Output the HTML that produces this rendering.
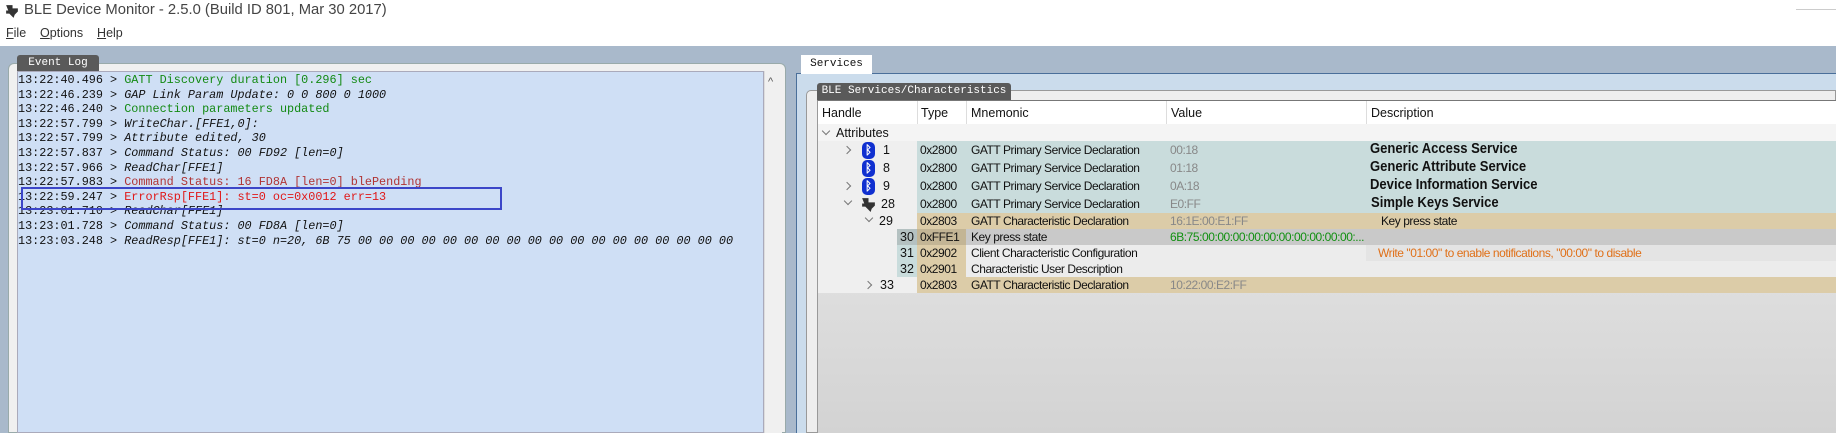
<!DOCTYPE html>
<html><head><meta charset="utf-8"><style>
*{margin:0;padding:0;box-sizing:border-box}
body{width:1836px;height:433px;overflow:hidden;background:#fff;position:relative;font-family:"Liberation Sans",sans-serif}
.a{position:absolute;white-space:nowrap}
.log{font-family:"Liberation Mono",monospace;font-size:11.8px;color:#111;left:18px;line-height:14px}
.g{color:#138a13}.i{font-style:italic}.r{color:#e01818}.br{color:#b03434}
.t{font-size:12px;color:#111;line-height:16px;letter-spacing:-0.45px}
.h{font-size:12.5px;color:#111;line-height:16px}
.row{position:absolute;left:917px;right:0}
.bt{position:absolute;width:13px;height:17px;background:#1030d0;border-radius:5px;color:#fff;font-size:12px;text-align:center;line-height:17px;font-weight:bold}
.chev{position:absolute;width:6px;height:6px;border-right:1.5px solid #777;border-bottom:1.5px solid #777}
.desc{font-size:14.5px;font-weight:bold;color:#111;transform:scaleX(0.9);transform-origin:left}
</style></head><body>
<svg class="a" style="left:4px;top:3px" width="16" height="16" viewBox="0 0 15 15"><path d="M2 2h6v3h5v3l-3 3-1 3-2-2-2-2H2V7h2z" fill="#333"/></svg>
<div class="a" style="left:24px;top:2px;font-size:14.8px;color:#444">BLE Device Monitor - 2.5.0 (Build ID 801, Mar 30 2017)</div>
<div class="a" style="left:6px;top:26px;font-size:12.5px;color:#333"><u>F</u>ile &nbsp;&nbsp; <u>O</u>ptions &nbsp;&nbsp; <u>H</u>elp</div>
<div class="a" style="left:1796px;top:9px;width:40px;height:1px;background:#ccc"></div>
<div class="a" style="left:0;top:46px;width:1836px;height:387px;background:#a9b9cb"></div>
<div class="a" style="left:8px;top:63px;width:778px;height:370px;background:#f0f0f0;border:1px solid #9aa;border-radius:6px 6px 0 0"></div>
<div class="a" style="left:17px;top:55px;width:82px;height:16px;background:#5a5a5a;border-radius:3px 3px 0 0;color:#fff;font-family:'Liberation Mono',monospace;font-size:11px;line-height:16px;text-align:center">Event Log</div>
<div class="a" style="left:17px;top:71px;width:747px;height:362px;background:#cfdff5;border:1px solid #aab"></div>
<div class="a" style="left:764px;top:71px;width:18px;height:362px;background:#f0f0f0;border-left:1px solid #ddd"></div>
<div class="a" style="left:768px;top:76px;font-size:11px;color:#555">^</div>
<div class="a log" style="top:73px">13:22:40.496 &gt; <span class="g">GATT Discovery duration [0.296] sec</span></div>
<div class="a log" style="top:87.6px">13:22:46.239 &gt; <span class="i">GAP Link Param Update: 0 0 800 0 1000</span></div>
<div class="a log" style="top:102.2px">13:22:46.240 &gt; <span class="g">Connection parameters updated</span></div>
<div class="a log" style="top:116.8px">13:22:57.799 &gt; <span class="i">WriteChar.[FFE1,0]:</span></div>
<div class="a log" style="top:131.4px">13:22:57.799 &gt; <span class="i">Attribute edited, 30</span></div>
<div class="a log" style="top:146px">13:22:57.837 &gt; <span class="i">Command Status: 00 FD92 [len=0]</span></div>
<div class="a log" style="top:160.6px">13:22:57.966 &gt; <span class="i">ReadChar[FFE1]</span></div>
<div class="a log" style="top:175.2px">13:22:57.983 &gt; <span class="br">Command Status: 16 FD8A [len=0] blePending</span></div>
<div class="a log" style="top:189.8px">13:22:59.247 &gt; <span class="r">ErrorRsp[FFE1]: st=0 oc=0x0012 err=13</span></div>
<div class="a log" style="top:204.4px">13:23:01.710 &gt; <span class="i">ReadChar[FFE1]</span></div>
<div class="a log" style="top:219px">13:23:01.728 &gt; <span class="i">Command Status: 00 FD8A [len=0]</span></div>
<div class="a log" style="top:233.6px">13:23:03.248 &gt; <span class="i">ReadResp[FFE1]: st=0 n=20, 6B 75 00 00 00 00 00 00 00 00 00 00 00 00 00 00 00 00 00 00</span></div>
<div class="a" style="left:21px;top:187px;width:481px;height:23px;border:2px solid #3c46c8"></div>
<div class="a" style="left:796px;top:73px;width:1040px;height:360px;background:#cbdcec;border-top:1px solid #4a6f9a;border-left:1px solid #4a6f9a"></div>
<div class="a" style="left:801px;top:55px;width:71px;height:19px;background:#fff;font-family:'Liberation Mono',monospace;font-size:11px;line-height:19px;text-align:center;color:#111">Services</div>
<div class="a" style="left:806px;top:90px;width:1030px;height:343px;background:#eee;border:1px solid #999;border-radius:5px 0 0 0"></div>
<div class="a" style="left:817px;top:83px;width:194px;height:17px;background:#5a5a5a;border-radius:3px 3px 0 0;color:#fff;font-family:'Liberation Mono',monospace;font-size:11px;line-height:17px;text-align:center">BLE Services/Characteristics</div>
<div class="a" style="left:817px;top:100px;width:1019px;height:333px;background:linear-gradient(#ececec,#d3d3d3);border-top:1px solid #777;border-left:1px solid #999"></div>
<div class="a" style="left:818px;top:101px;width:1018px;height:23px;background:#fff"></div>
<div class="a" style="left:917px;top:101px;width:1px;height:23px;background:#ddd"></div>
<div class="a" style="left:966px;top:101px;width:1px;height:23px;background:#ddd"></div>
<div class="a" style="left:1166px;top:101px;width:1px;height:23px;background:#ddd"></div>
<div class="a" style="left:1366px;top:101px;width:1px;height:23px;background:#ddd"></div>
<div class="a h" style="left:822px;top:105px">Handle</div>
<div class="a h" style="left:921px;top:105px">Type</div>
<div class="a h" style="left:971px;top:105px">Mnemonic</div>
<div class="a h" style="left:1171px;top:105px">Value</div>
<div class="a h" style="left:1371px;top:105px">Description</div>
<div class="a" style="left:818px;top:124px;width:1018px;height:17px;background:#f4f4f4"></div>
<div class="chev" style="left:823px;top:128px;transform:rotate(45deg)"></div>
<div class="a h" style="left:836px;top:125px">Attributes</div>
<div class="a" style="left:818px;top:141px;width:99px;height:152px;background:#efefef"></div>
<div class="row" style="top:141px;height:72px;background:#c9dcdc"></div>
<div class="row" style="top:213px;height:16px;background:#dccca8"></div>
<div class="row" style="top:229px;height:16px;background:#c9c9c9"></div>
<div class="row" style="top:245px;height:32px;background:#ececec"></div>
<div class="row" style="top:277px;height:16px;background:#dccca8"></div>
<div class="a" style="left:897px;top:229px;width:20px;height:16px;background:#b4c1c1"></div>
<div class="a" style="left:917px;top:229px;width:49px;height:16px;background:#c3b595"></div>
<div class="a" style="left:897px;top:245px;width:20px;height:32px;background:#c9dcdc"></div>
<div class="a" style="left:917px;top:245px;width:49px;height:32px;background:#dccca8"></div>
<div class="a" style="left:1366px;top:245px;width:470px;height:16px;background:#e4e4e4"></div>
<div class="chev" style="left:844px;top:147px;transform:rotate(-45deg)"></div>
<div class="chev" style="left:844px;top:183px;transform:rotate(-45deg)"></div>
<div class="chev" style="left:845px;top:198px;transform:rotate(45deg)"></div>
<div class="chev" style="left:866px;top:215px;transform:rotate(45deg)"></div>
<div class="chev" style="left:865px;top:282px;transform:rotate(-45deg)"></div>
<div class="bt" style="left:862px;top:142px">ᛒ</div>
<div class="bt" style="left:862px;top:160px">ᛒ</div>
<div class="bt" style="left:862px;top:178px">ᛒ</div>
<svg class="a" style="left:860px;top:196px" width="17" height="17" viewBox="0 0 16 16"><path d="M2 2h6v4h6v3l-3 3-1 3-3-3-2-2H2V7h2z" fill="#333"/></svg>
<div class="a h" style="left:883px;top:142px">1</div>
<div class="a h" style="left:883px;top:160px">8</div>
<div class="a h" style="left:883px;top:178px">9</div>
<div class="a h" style="left:881px;top:196px">28</div>
<div class="a h" style="left:879px;top:213px">29</div>
<div class="a h" style="left:900px;top:229px">30</div>
<div class="a h" style="left:900px;top:245px">31</div>
<div class="a h" style="left:900px;top:261px">32</div>
<div class="a h" style="left:880px;top:277px">33</div>
<div class="a t" style="left:920px;top:142px">0x2800</div><div class="a t" style="left:971px;top:142px">GATT Primary Service Declaration</div><div class="a t" style="left:1170px;top:142px;color:#888">00:18</div>
<div class="a t" style="left:920px;top:160px">0x2800</div><div class="a t" style="left:971px;top:160px">GATT Primary Service Declaration</div><div class="a t" style="left:1170px;top:160px;color:#888">01:18</div>
<div class="a t" style="left:920px;top:178px">0x2800</div><div class="a t" style="left:971px;top:178px">GATT Primary Service Declaration</div><div class="a t" style="left:1170px;top:178px;color:#888">0A:18</div>
<div class="a t" style="left:920px;top:196px">0x2800</div><div class="a t" style="left:971px;top:196px">GATT Primary Service Declaration</div><div class="a t" style="left:1170px;top:196px;color:#888">E0:FF</div>
<div class="a t" style="left:920px;top:213px">0x2803</div><div class="a t" style="left:971px;top:213px">GATT Characteristic Declaration</div><div class="a t" style="left:1170px;top:213px;color:#888">16:1E:00:E1:FF</div>
<div class="a t" style="left:920px;top:229px">0xFFE1</div><div class="a t" style="left:971px;top:229px">Key press state</div><div class="a t" style="left:1170px;top:229px;color:#129012">6B:75:00:00:00:00:00:00:00:00:00:00:...</div>
<div class="a t" style="left:920px;top:245px">0x2902</div><div class="a t" style="left:971px;top:245px">Client Characteristic Configuration</div>
<div class="a t" style="left:920px;top:261px">0x2901</div><div class="a t" style="left:971px;top:261px">Characteristic User Description</div>
<div class="a t" style="left:920px;top:277px">0x2803</div><div class="a t" style="left:971px;top:277px">GATT Characteristic Declaration</div><div class="a t" style="left:1170px;top:277px;color:#888">10:22:00:E2:FF</div>
<div class="a desc" style="left:1370px;top:141px">Generic Access Service</div>
<div class="a desc" style="left:1370px;top:159px">Generic Attribute Service</div>
<div class="a desc" style="left:1370px;top:177px">Device Information Service</div>
<div class="a desc" style="left:1371px;top:195px">Simple Keys Service</div>
<div class="a t" style="left:1381px;top:213px">Key press state</div>
<div class="a t" style="left:1378px;top:245px;color:#e07018">Write "01:00" to enable notifications, "00:00" to disable</div>
</body></html>
